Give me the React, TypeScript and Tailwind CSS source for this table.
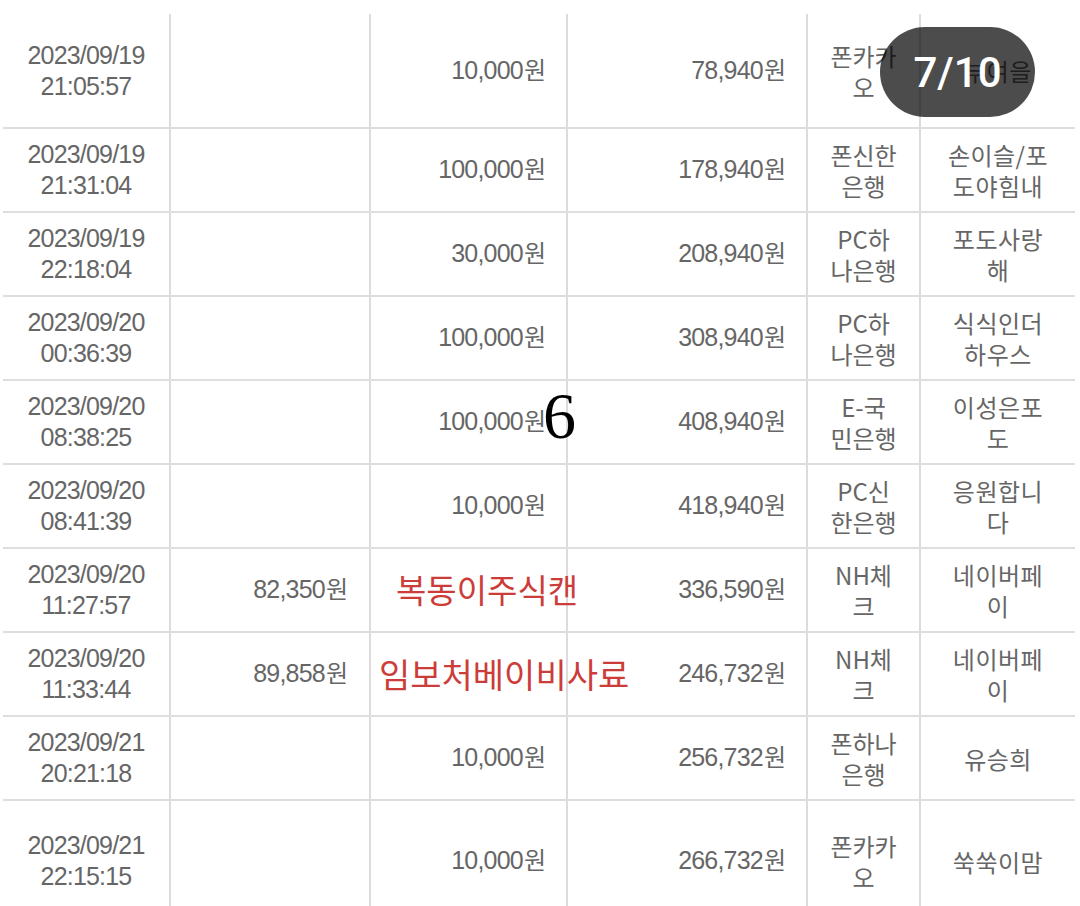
import React from "react";

type Row = {
  date: string;
  time: string;
  out?: string;
  inn?: string;
  bal: string;
  via: string[];
  memo: string[];
  h: string;
};

const rows: Row[] = [
  { date: "2023/09/19", time: "21:05:57", inn: "10,000", bal: "78,940", via: ["폰카카", "오"], memo: ["부여을"], h: "h-[115px]" },
  { date: "2023/09/19", time: "21:31:04", inn: "100,000", bal: "178,940", via: ["폰신한", "은행"], memo: ["손이슬/포", "도야힘내"], h: "h-[84px]" },
  { date: "2023/09/19", time: "22:18:04", inn: "30,000", bal: "208,940", via: ["PC하", "나은행"], memo: ["포도사랑", "해"], h: "h-[84px]" },
  { date: "2023/09/20", time: "00:36:39", inn: "100,000", bal: "308,940", via: ["PC하", "나은행"], memo: ["식식인더", "하우스"], h: "h-[84px]" },
  { date: "2023/09/20", time: "08:38:25", inn: "100,000", bal: "408,940", via: ["E-국", "민은행"], memo: ["이성은포", "도"], h: "h-[84px]" },
  { date: "2023/09/20", time: "08:41:39", inn: "10,000", bal: "418,940", via: ["PC신", "한은행"], memo: ["응원합니", "다"], h: "h-[84px]" },
  { date: "2023/09/20", time: "11:27:57", out: "82,350", bal: "336,590", via: ["NH체", "크"], memo: ["네이버페", "이"], h: "h-[84px]" },
  { date: "2023/09/20", time: "11:33:44", out: "89,858", bal: "246,732", via: ["NH체", "크"], memo: ["네이버페", "이"], h: "h-[84px]" },
  { date: "2023/09/21", time: "20:21:18", inn: "10,000", bal: "256,732", via: ["폰하나", "은행"], memo: ["유승희"], h: "h-[84px]" },
  { date: "2023/09/21", time: "22:15:15", inn: "10,000", bal: "266,732", via: ["폰카카", "오"], memo: ["쑥쑥이맘"], h: "h-[120px]" },
];

const num = "font-['Liberation_Sans',sans-serif] text-[25px] tracking-[-0.8px]";
const kor = "font-['Noto_Sans_CJK_KR',sans-serif] text-[24px]";

function Won({ value }: { value?: string }) {
  if (!value) return null;
  return (
    <span className="whitespace-nowrap">
      <span className={num}>{value}</span>
      <span className={`${kor} ml-[1px] text-[23px]`}>원</span>
    </span>
  );
}

const cell = "flex items-center border-r-2 border-[#dcdcdc]";

export default function App() {
  return (
    <div className="relative h-[906px] w-[1080px] overflow-hidden bg-white text-[#666666] leading-[31px]">
      <div className="ml-[3px] w-[1072px] pt-[14px]">
        {rows.map((r, i) => (
          <div
            key={i}
            className={`grid grid-cols-[168px_200px_197px_240px_113px_154px] ${r.h} ${
              i === rows.length - 1 ? "" : "border-b-2 border-[#dedede]"
            }`}
          >
            <div className={`${cell} justify-center`}>
              <p className={`whitespace-pre-line text-center ${num}`}>{`${r.date}\n${r.time}`}</p>
            </div>
            <div className={`${cell} justify-end pr-[21px]`}>
              <Won value={r.out} />
            </div>
            <div className={`${cell} relative justify-end pr-[20px]`}>
              <Won value={r.inn} />
              {i === 4 && (
                <span className="absolute left-[172px] top-[2px] font-['Liberation_Serif',serif] text-[66px] leading-none text-black">
                  6
                </span>
              )}
              {i === 6 && (
                <span className="absolute left-[25px] top-[24px] whitespace-nowrap font-['Noto_Sans_CJK_KR',sans-serif] text-[33px] leading-none text-[#cc3d3a]">
                  복동이주식캔
                </span>
              )}
              {i === 7 && (
                <span className="absolute left-[8px] top-[24px] whitespace-nowrap font-['Noto_Sans_CJK_KR',sans-serif] text-[34px] leading-none text-[#cc3d3a]">
                  임보처베이비사료
                </span>
              )}
            </div>
            <div className={`${cell} justify-end pr-[20px]`}>
              <Won value={r.bal} />
            </div>
            <div className={`${cell} justify-center`}>
              <p className={`whitespace-pre-line text-center ${kor}`}>{r.via.join("\n")}</p>
            </div>
            <div className="flex items-center justify-center">
              <p className={`whitespace-pre-line text-center tracking-[0.5px] ${kor}`}>{r.memo.join("\n")}</p>
            </div>
          </div>
        ))}
      </div>

      <div className="absolute left-[880px] top-[27px] flex h-[90px] w-[155px] items-center justify-center rounded-full bg-black/70">
        <span className="font-['Roboto',sans-serif] text-[42px] font-medium text-white">7/10</span>
      </div>
    </div>
  );
}
